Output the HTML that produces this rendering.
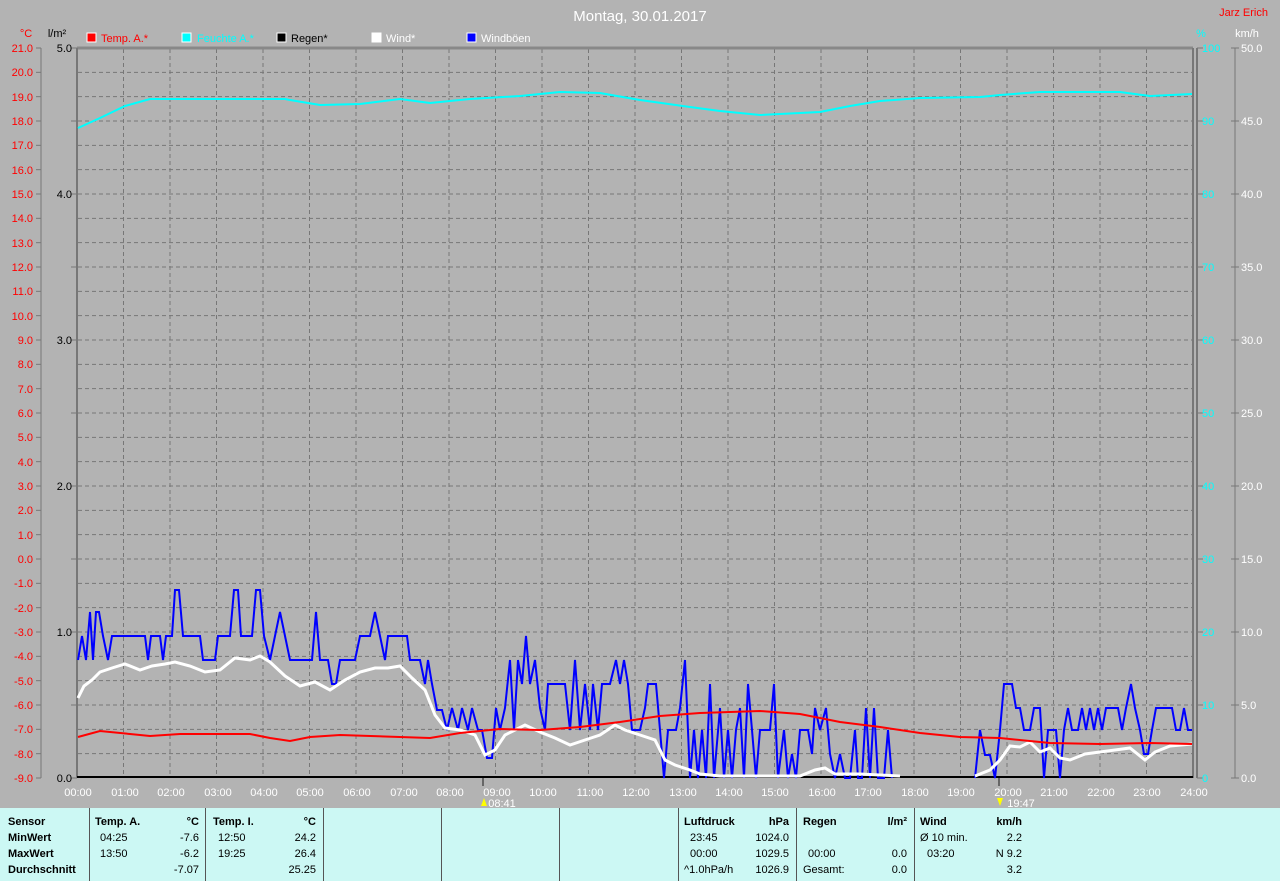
<!DOCTYPE html>
<html><head><meta charset="utf-8"><style>
body{margin:0;width:1280px;height:881px;background:#b3b3b3;overflow:hidden;font-family:"Liberation Sans",sans-serif;position:relative}
svg{position:absolute;left:0;top:0}
.tbl{position:absolute;left:0;top:808px;width:1280px;height:73px;background:#ccf8f4;font-size:11px;color:#000}
.col{position:absolute;top:0;height:73px;border-left:1px solid #555}
.r{position:absolute;white-space:nowrap}
b{font-weight:bold}
</style></head><body>
<svg width="1280" height="881" font-family="Liberation Sans, sans-serif" font-size="11">
<g id="grid" stroke="#777" stroke-dasharray="4,3" stroke-width="1"></g>
<line x1="77" y1="48" x2="1193" y2="48" stroke="#888" stroke-width="3"/>
<line x1="77" y1="48" x2="77" y2="778" stroke="#777" stroke-width="2"/>
<line x1="1193" y1="48" x2="1193" y2="778" stroke="#777" stroke-width="2"/>
<line x1="1197" y1="48" x2="1197" y2="778" stroke="#777" stroke-width="2"/>
<line x1="41" y1="48" x2="41" y2="778" stroke="#777"/>
<line x1="1235" y1="48" x2="1235" y2="778" stroke="#777"/>
<line x1="77" y1="777" x2="1193" y2="777" stroke="#000" stroke-width="2"/>
<g id="ticks" stroke="#777"></g>
<text x="640" y="21" fill="#fff" font-size="15" text-anchor="middle">Montag, 30.01.2017</text>
<text x="1268" y="16" fill="#f00" font-size="11" text-anchor="end">Jarz Erich</text>
<text x="26" y="37" fill="#f00" text-anchor="middle">°C</text>
<text x="57" y="37" fill="#000" text-anchor="middle">l/m²</text>
<text x="1201" y="37" fill="#0ff" text-anchor="middle">%</text>
<text x="1247" y="37" fill="#fff" text-anchor="middle">km/h</text>
<rect x="87" y="33" width="9" height="9" fill="#f00" stroke="#fff"/><text x="101" y="42" fill="#f00">Temp. A.*</text>
<rect x="182" y="33" width="9" height="9" fill="#0ff" stroke="#fff"/><text x="197" y="42" fill="#0ff">Feuchte A.*</text>
<rect x="277" y="33" width="9" height="9" fill="#000" stroke="#fff"/><text x="291" y="42" fill="#000">Regen*</text>
<rect x="372" y="33" width="9" height="9" fill="#fff" stroke="#fff"/><text x="386" y="42" fill="#fff">Wind*</text>
<rect x="467" y="33" width="9" height="9" fill="#00f" stroke="#fff"/><text x="481" y="42" fill="#fff">Windböen</text>
<g fill="#f00" text-anchor="end" font-size="11">
<text x="33" y="52">21.0</text><text x="33" y="76">20.0</text><text x="33" y="101">19.0</text><text x="33" y="125">18.0</text><text x="33" y="149">17.0</text><text x="33" y="174">16.0</text><text x="33" y="198">15.0</text><text x="33" y="222">14.0</text><text x="33" y="247">13.0</text><text x="33" y="271">12.0</text><text x="33" y="295">11.0</text><text x="33" y="320">10.0</text><text x="33" y="344">9.0</text><text x="33" y="368">8.0</text><text x="33" y="393">7.0</text><text x="33" y="417">6.0</text><text x="33" y="441">5.0</text><text x="33" y="466">4.0</text><text x="33" y="490">3.0</text><text x="33" y="514">2.0</text><text x="33" y="539">1.0</text><text x="33" y="563">0.0</text><text x="33" y="587">-1.0</text><text x="33" y="612">-2.0</text><text x="33" y="636">-3.0</text><text x="33" y="660">-4.0</text><text x="33" y="685">-5.0</text><text x="33" y="709">-6.0</text><text x="33" y="733">-7.0</text><text x="33" y="758">-8.0</text><text x="33" y="782">-9.0</text>
</g>
<g fill="#000" text-anchor="end">
<text x="72" y="52">5.0</text><text x="72" y="198">4.0</text><text x="72" y="344">3.0</text><text x="72" y="490">2.0</text><text x="72" y="636">1.0</text><text x="72" y="782">0.0</text>
</g>
<g fill="#0ff">
<text x="1202" y="52">100</text><text x="1202" y="125">90</text><text x="1202" y="198">80</text><text x="1202" y="271">70</text><text x="1202" y="344">60</text><text x="1202" y="417">50</text><text x="1202" y="490">40</text><text x="1202" y="563">30</text><text x="1202" y="636">20</text><text x="1202" y="709">10</text><text x="1202" y="782">0</text>
</g>
<g fill="#fff">
<text x="1241" y="52">50.0</text><text x="1241" y="125">45.0</text><text x="1241" y="198">40.0</text><text x="1241" y="271">35.0</text><text x="1241" y="344">30.0</text><text x="1241" y="417">25.0</text><text x="1241" y="490">20.0</text><text x="1241" y="563">15.0</text><text x="1241" y="636">10.0</text><text x="1241" y="709">5.0</text><text x="1241" y="782">0.0</text>
</g>
<g fill="#fff" text-anchor="middle">
<text x="78" y="796">00:00</text><text x="125" y="796">01:00</text><text x="171" y="796">02:00</text><text x="218" y="796">03:00</text><text x="264" y="796">04:00</text><text x="310" y="796">05:00</text><text x="357" y="796">06:00</text><text x="404" y="796">07:00</text><text x="450" y="796">08:00</text><text x="497" y="796">09:00</text><text x="543" y="796">10:00</text><text x="590" y="796">11:00</text><text x="636" y="796">12:00</text><text x="683" y="796">13:00</text><text x="729" y="796">14:00</text><text x="775" y="796">15:00</text><text x="822" y="796">16:00</text><text x="868" y="796">17:00</text><text x="915" y="796">18:00</text><text x="961" y="796">19:00</text><text x="1008" y="796">20:00</text><text x="1054" y="796">21:00</text><text x="1101" y="796">22:00</text><text x="1147" y="796">23:00</text><text x="1194" y="796">24:00</text>
<text x="502" y="807">08:41</text><text x="1021" y="807">19:47</text>
</g>
<line x1="483" y1="778" x2="483" y2="786" stroke="#666" stroke-width="2"/>
<line x1="999" y1="778" x2="999" y2="786" stroke="#666" stroke-width="2"/>
<polygon points="481,806 484,798 487,806" fill="#ff0"/><polygon points="997,798 1000,806 1003,798" fill="#ff0"/>
<polyline fill="none" stroke="#0ff" stroke-width="2" points="78,128 100,118 125,106 150,99 175,99 285,99 290,100 320,105 360,104 400,99 430,103 470,99 520,96 560,92 600,93 640,100 690,107 720,111 760,115 820,112 850,106 880,101 920,98 980,97 1000,95 1040,92 1120,92 1150,96 1192,94"/>
<polyline fill="none" stroke="#00f" stroke-width="2" points="78,660 82,636 86,660 90,612 93,660 96,612 99,612 103,636 108,660 112,636 145,636 148,660 151,636 160,636 163,660 166,636 172,636 175,590 179,590 183,636 200,636 203,660 215,660 218,636 230,636 234,590 238,590 241,636 252,636 256,590 260,590 264,636 270,660 275,636 280,612 285,636 290,660 312,660 316,612 320,660 328,660 332,684 336,684 340,660 355,660 360,636 370,636 375,612 380,636 385,660 388,636 407,636 410,660 420,660 425,684 428,660 432,684 437,710 442,710 447,730 452,708 458,730 462,708 468,730 472,708 478,730 482,730 487,758 492,758 496,708 500,730 505,708 510,660 514,730 518,660 522,684 526,636 530,684 535,660 540,708 545,730 548,684 565,684 570,730 575,660 580,730 585,684 590,730 593,684 598,730 602,684 610,684 616,660 620,684 624,660 628,684 632,730 640,730 645,708 648,684 656,684 660,730 664,778 668,730 676,730 680,708 685,660 690,778 694,730 698,778 702,730 706,778 710,684 714,778 720,708 724,778 728,730 732,778 736,730 740,708 744,778 748,684 752,730 756,778 760,730 770,730 774,684 778,778 784,730 788,778 792,754 796,778 800,730 808,730 812,754 815,708 820,730 826,708 830,754 835,778 840,754 845,778 850,778 855,730 858,778 862,778 866,708 870,778 874,708 878,778 884,778 888,730 892,778"/>
<polyline fill="none" stroke="#00f" stroke-width="2" points="975,778 980,730 985,755 990,755 995,778 1000,730 1004,684 1012,684 1016,708 1020,708 1024,730 1030,730 1034,708 1040,708 1044,778 1048,730 1056,730 1060,778 1064,730 1068,708 1072,730 1078,730 1082,708 1086,730 1090,708 1094,730 1098,708 1102,730 1106,708 1118,708 1122,730 1126,708 1131,684 1135,708 1140,730 1144,754 1148,754 1152,730 1156,708 1172,708 1176,730 1180,730 1184,708 1188,730 1192,730"/>
<polyline fill="none" stroke="#fff" stroke-width="3" points="78,698 84,686 92,680 100,672 112,668 125,664 140,670 152,666 165,664 175,662 190,666 205,672 220,670 235,658 250,660 260,656 270,662 285,676 300,686 315,682 330,690 345,680 360,672 375,668 388,668 400,666 412,678 425,690 435,715 445,728 460,730 475,735 485,755 495,750 505,735 515,730 525,725 540,732 555,738 570,745 585,740 600,735 615,725 625,730 640,735 655,740 665,760 675,765 690,770 700,774 720,776 750,776 800,776 815,770 825,768 835,774 860,774 900,776"/>
<polyline fill="none" stroke="#fff" stroke-width="3" points="975,776 990,770 1000,760 1010,746 1020,747 1030,742 1040,752 1050,748 1060,758 1070,760 1085,754 1100,752 1115,750 1130,748 1145,760 1155,752 1170,746 1192,744"/>
<polyline fill="none" stroke="#f00" stroke-width="2" points="78,737 100,731 130,734 150,736 180,734 250,734 270,738 290,741 310,737 340,735 400,737 430,738 460,733 500,729 540,730 580,727 620,722 660,716 700,713 760,711 800,714 840,722 880,727 920,733 960,737 1000,738 1050,743 1100,744 1150,743 1192,744"/>
</svg>
<div class="tbl">
<div class="col" style="left:89px"></div><div class="col" style="left:205px"></div><div class="col" style="left:323px"></div><div class="col" style="left:441px"></div><div class="col" style="left:559px"></div><div class="col" style="left:678px"></div><div class="col" style="left:796px"></div><div class="col" style="left:914px"></div>
<div class="r" style="left:8px;top:8px"><b>Sensor</b></div><div class="r" style="left:8px;top:24px"><b>MinWert</b></div><div class="r" style="left:8px;top:40px"><b>MaxWert</b></div><div class="r" style="left:8px;top:56px"><b>Durchschnitt</b></div>
<div class="r" style="left:95px;top:8px"><b>Temp. A.</b></div><div class="r" style="right:1081px;top:8px"><b>°C</b></div>
<div class="r" style="left:100px;top:24px">04:25</div><div class="r" style="right:1081px;top:24px">-7.6</div>
<div class="r" style="left:100px;top:40px">13:50</div><div class="r" style="right:1081px;top:40px">-6.2</div>
<div class="r" style="right:1081px;top:56px">-7.07</div>
<div class="r" style="left:213px;top:8px"><b>Temp. I.</b></div><div class="r" style="right:964px;top:8px"><b>°C</b></div>
<div class="r" style="left:218px;top:24px">12:50</div><div class="r" style="right:964px;top:24px">24.2</div>
<div class="r" style="left:218px;top:40px">19:25</div><div class="r" style="right:964px;top:40px">26.4</div>
<div class="r" style="right:964px;top:56px">25.25</div>
<div class="r" style="left:684px;top:8px"><b>Luftdruck</b></div><div class="r" style="right:491px;top:8px"><b>hPa</b></div>
<div class="r" style="left:690px;top:24px">23:45</div><div class="r" style="right:491px;top:24px">1024.0</div>
<div class="r" style="left:690px;top:40px">00:00</div><div class="r" style="right:491px;top:40px">1029.5</div>
<div class="r" style="left:684px;top:56px">^1.0hPa/h</div><div class="r" style="right:491px;top:56px">1026.9</div>
<div class="r" style="left:803px;top:8px"><b>Regen</b></div><div class="r" style="right:373px;top:8px"><b>l/m²</b></div>
<div class="r" style="left:808px;top:40px">00:00</div><div class="r" style="right:373px;top:40px">0.0</div>
<div class="r" style="left:803px;top:56px">Gesamt:</div><div class="r" style="right:373px;top:56px">0.0</div>
<div class="r" style="left:920px;top:8px"><b>Wind</b></div><div class="r" style="right:258px;top:8px"><b>km/h</b></div>
<div class="r" style="left:920px;top:24px">Ø 10 min.</div><div class="r" style="right:258px;top:24px">2.2</div>
<div class="r" style="left:927px;top:40px">03:20</div><div class="r" style="right:258px;top:40px">N 9.2</div>
<div class="r" style="right:258px;top:56px">3.2</div>
</div>
<script>
var g=document.getElementById('grid'),t=document.getElementById('ticks'),ns='http://www.w3.org/2000/svg';
function L(p,a,b,c,d){var l=document.createElementNS(ns,'line');l.setAttribute('x1',a);l.setAttribute('y1',b);l.setAttribute('x2',c);l.setAttribute('y2',d);p.appendChild(l);}
for(var h=1;h<24;h++){var x=77+46.5*h;L(g,x,49,x,777);}
for(var i=1;i<30;i++){var y=48+730/30*i;L(g,78,y,1192,y);}
for(var i=0;i<=30;i++){var y=48+730/30*i;L(t,36,y,41,y);}
for(var i=0;i<=10;i++){var y=48+73*i;L(t,1197,y,1203,y);L(t,1231,y,1239,y);L(t,71,y,77,y);}
</script>
</body></html>
